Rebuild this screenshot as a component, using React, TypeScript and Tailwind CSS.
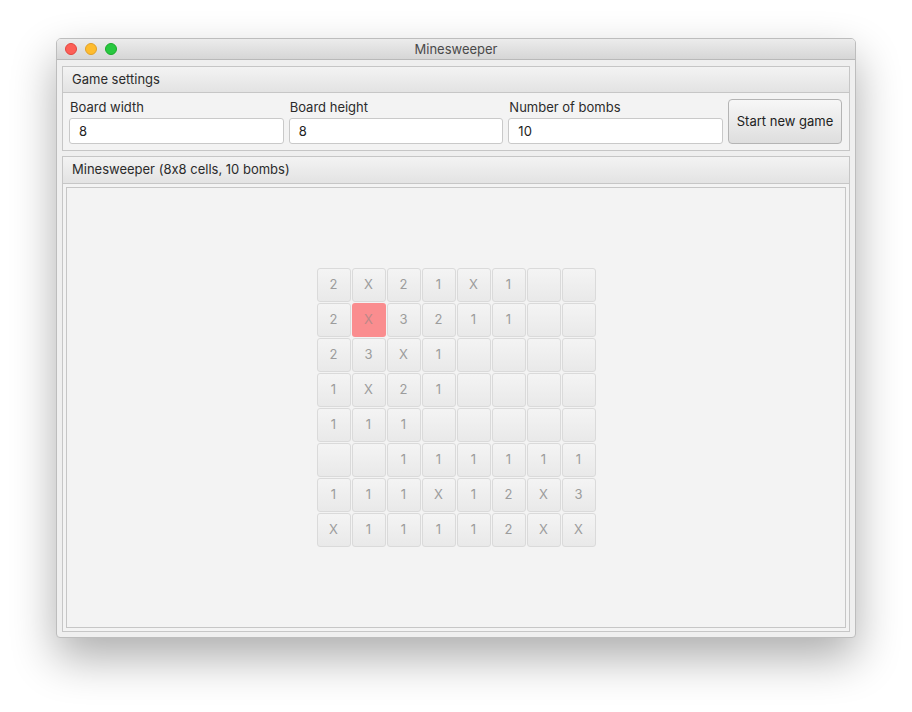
import React from "react";

const board: string[][] = [
  ["2", "X", "2", "1", "X", "1", "", ""],
  ["2", "X", "3", "2", "1", "1", "", ""],
  ["2", "3", "X", "1", "", "", "", ""],
  ["1", "X", "2", "1", "", "", "", ""],
  ["1", "1", "1", "", "", "", "", ""],
  ["", "", "1", "1", "1", "1", "1", "1"],
  ["1", "1", "1", "X", "1", "2", "X", "3"],
  ["X", "1", "1", "1", "1", "2", "X", "X"],
];

function Field({ label, value }: { label: string; value: string }) {
  return (
    <div className="flex flex-1 flex-col">
      <div className="h-[16px] leading-[16px] text-[13px] text-[#2b2b2b] pl-[1px]">{label}</div>
      <div className="mt-[3px] h-[26px] rounded-[3px] border border-[#c9c9c9] bg-white pl-[9px] text-[13px] leading-[25px] text-[#222]">
        {value}
      </div>
    </div>
  );
}

export default function App() {
  return (
    <div
      className="relative h-[712px] w-[912px] bg-white [font-feature-settings:'calt'_0]"
      style={{ fontFamily: "Inter, 'Liberation Sans', sans-serif" }}
    >
      <div className="absolute left-[56px] top-[38px] flex h-[600px] w-[800px] flex-col overflow-hidden rounded-t-[5px] rounded-b-[4px] border border-[#bdbdbd] bg-[#efefef] shadow-[0_20px_45px_rgba(0,0,0,0.32)]">
        {/* title bar */}
        <div className="relative flex h-[21px] shrink-0 items-center justify-center border-b border-[#b9b9b9] bg-gradient-to-b from-[#ececec] to-[#d6d6d6]">
          <div className="absolute left-[8px] top-[4px] flex gap-[8px]">
            <div className="h-[12px] w-[12px] rounded-full border border-[#e2463f] bg-[#fd5f57]" />
            <div className="h-[12px] w-[12px] rounded-full border border-[#e0a028] bg-[#febc2e]" />
            <div className="h-[12px] w-[12px] rounded-full border border-[#1aab29] bg-[#28c840]" />
          </div>
          <span className="pt-[2px] text-[13px] text-[#4a4a4a]">Minesweeper</span>
        </div>

        {/* body */}
        <div className="flex flex-1 flex-col gap-[5px] px-[5px] pb-[5px] pt-[6px]">
          {/* Game settings panel */}
          <div className="flex flex-col border border-[#c6c6c6] bg-[#f3f3f3]">
            <div className="flex h-[26px] items-center border-b border-[#c6c6c6] bg-gradient-to-b from-[#f3f3f3] to-[#e3e3e3] pl-[9px] text-[13px] text-[#2b2b2b]">
              Game settings
            </div>
            <div className="flex items-stretch gap-[5px] pb-[6px] pl-[6px] pr-[7px] pt-[6px]">
              <Field label="Board width" value="8" />
              <Field label="Board height" value="8" />
              <Field label="Number of bombs" value="10" />
              <button className="h-[45px] w-[114px] shrink-0 rounded-[4px] border border-[#b4b4b4] bg-gradient-to-b from-[#f7f7f7] to-[#dedede] text-[13px] text-[#222]">
                Start new game
              </button>
            </div>
          </div>

          {/* Minesweeper panel */}
          <div className="flex flex-1 flex-col border border-[#c6c6c6] bg-[#f3f3f3]">
            <div className="flex h-[27px] items-center border-b border-[#c6c6c6] bg-gradient-to-b from-[#f3f3f3] to-[#e3e3e3] pl-[9px] text-[13px] text-[#2b2b2b]">
              Minesweeper (8x8 cells, 10 bombs)
            </div>
            <div className="flex flex-1 flex-col px-[3px] pb-[3px] pt-[3px]">
              <div className="flex flex-1 items-center justify-center border border-[#c6c6c6] bg-[#f3f3f3]">
                <div className="grid grid-cols-[repeat(8,34px)] grid-rows-[repeat(8,34px)] gap-[1px]">
                  {board.map((row, r) =>
                    row.map((v, c) => {
                      const red = r === 1 && c === 1;
                      return (
                        <div
                          key={`${r}-${c}`}
                          className={
                            red
                              ? "flex items-center justify-center rounded-[3px] bg-[#fa8d8f] text-[13px] text-[#b88]"
                              : "flex items-center justify-center rounded-[3px] border border-[#dadada] bg-gradient-to-b from-[#f4f4f4] to-[#e9e9e9] text-[13px] text-[#9c9c9c]"
                          }
                        >
                          {v}
                        </div>
                      );
                    })
                  )}
                </div>
              </div>
            </div>
          </div>
        </div>
      </div>
    </div>
  );
}
